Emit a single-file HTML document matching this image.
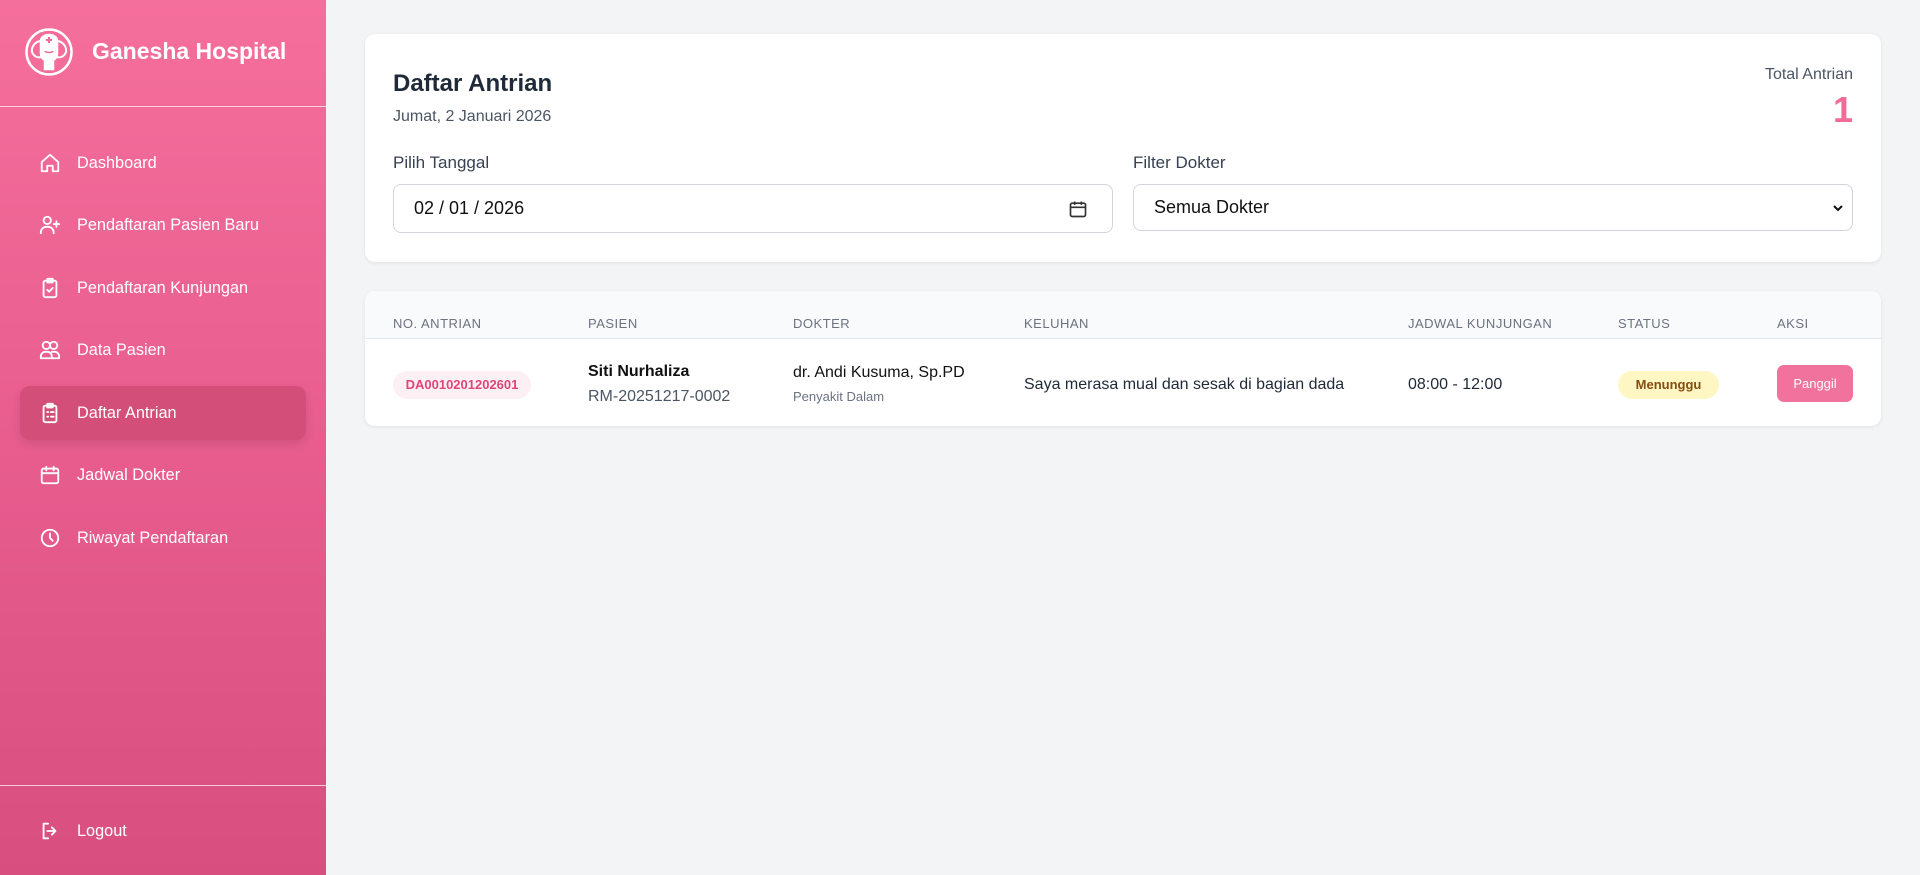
<!DOCTYPE html>
<html><head><meta charset="utf-8"><style>
*{box-sizing:border-box;margin:0;padding:0}
body{width:1920px;height:875px;overflow:hidden;font-family:"Liberation Sans",sans-serif;background:#f3f4f6;position:relative;color:#1f2937}
.sb{position:absolute;left:0;top:0;width:326px;height:875px;background:linear-gradient(180deg,#f56f9c 0%,#e85d8e 50%,#d84f7f 100%);color:#fff}
.logo{position:absolute;left:24px;top:27px;width:50px;height:50px}
.brand{position:absolute;left:92px;top:38px;font-size:23px;font-weight:bold}
.hr1{position:absolute;left:0;top:106px;width:326px;height:1px;background:rgba(255,255,255,.7)}
.hr2{position:absolute;left:0;top:785px;width:326px;height:1px;background:rgba(255,255,255,.7)}
.nav{position:absolute;left:20px;width:286px;height:54px;display:flex;align-items:center;font-size:16.3px}
.nav svg{position:absolute;left:19px;width:22px;height:22px;fill:none;stroke:#fff;stroke-width:2;stroke-linecap:round;stroke-linejoin:round}
.nav span{position:absolute;left:57px}
.act{background:#d34f7a;border-radius:10px;box-shadow:0 4px 10px rgba(0,0,0,.1)}
.card{position:absolute;left:365px;width:1516px;background:#fff;border-radius:10px;box-shadow:0 1px 4px rgba(0,0,0,.08)}
.t{position:absolute;white-space:nowrap}
.inp{position:absolute;top:150px;height:49px;border:1px solid #d1d5db;border-radius:8px;font-size:18px;display:flex;align-items:center;padding-left:20px;color:#111}
.th{position:absolute;top:25px;font-size:13px;color:#6b7280;letter-spacing:.5px}
</style></head><body>
<div class="sb">
<svg class="logo" viewBox="0 0 50 50" fill="none" stroke="#fff" stroke-width="2.5"><circle cx="25" cy="25" r="22.5"/><path d="M16 14c-5 1-9 6-8 11 2 5 6 6 9 5M34 14c5 1 9 6 8 11-2 5-6 6-9 5" stroke-width="2"/><path d="M17 14c0-4 4-6 8-6s8 2 8 6v12c0 4-2 6-4 7v9h-8v-9c-2-1-4-3-4-7z" fill="#fff"/><path d="M25 10v6M22 13h6" stroke="#f06b98" stroke-width="2"/><path d="M21 24c1 2 7 2 8 0" stroke="#f06b98" stroke-width="1.5"/></svg>
<div class="brand">Ganesha Hospital</div>
<div class="hr1"></div>
<div class="nav" style="top:136px"><svg viewBox="0 0 24 24"><path d="M3 11l9-8 9 8v10h-6v-6h-6v6H3z"/></svg><span>Dashboard</span></div>
<div class="nav" style="top:198px"><svg viewBox="0 0 24 24"><circle cx="9" cy="7" r="4"/><path d="M2 21v-1a6 6 0 0 1 6-6h2a6 6 0 0 1 6 6v1M19 8v6M16 11h6"/></svg><span>Pendaftaran Pasien Baru</span></div>
<div class="nav" style="top:261px"><svg viewBox="0 0 24 24"><rect x="5" y="4" width="14" height="18" rx="2"/><path d="M9 2h6v4H9zM9 14l2 2 4-4"/></svg><span>Pendaftaran Kunjungan</span></div>
<div class="nav" style="top:323px"><svg viewBox="0 0 24 24"><circle cx="8" cy="7" r="4"/><circle cx="16" cy="7" r="4"/><path d="M2 21v-2a5 5 0 0 1 5-5h2a5 5 0 0 1 5 5v2zM14 14h3a5 5 0 0 1 5 5v2h-8"/></svg><span>Data Pasien</span></div>
<div class="nav act" style="top:386px"><svg viewBox="0 0 24 24"><rect x="5" y="4" width="14" height="18" rx="2"/><path d="M9 2h6v4H9zM9 11h1M13 11h3M9 16h1M13 16h3"/></svg><span>Daftar Antrian</span></div>
<div class="nav" style="top:448px"><svg viewBox="0 0 24 24"><rect x="3" y="5" width="18" height="16" rx="2"/><path d="M8 3v4M16 3v4M3 10h18"/></svg><span>Jadwal Dokter</span></div>
<div class="nav" style="top:511px"><svg viewBox="0 0 24 24"><circle cx="12" cy="12" r="9"/><path d="M12 7v5l3 3"/></svg><span>Riwayat Pendaftaran</span></div>
<div class="hr2"></div>
<div class="nav" style="top:804px"><svg viewBox="0 0 24 24"><path d="M10 4H5v16h5M14 8l4 4-4 4M18 12H9"/></svg><span>Logout</span></div>
</div>

<div class="card" style="top:34px;height:228px">
<div class="t" style="left:28px;top:36px;font-size:24px;font-weight:bold;color:#1f2937">Daftar Antrian</div>
<div class="t" style="left:28px;top:74px;font-size:16px;color:#4b5563">Jumat, 2 Januari 2026</div>
<div class="t" style="right:28px;top:32px;font-size:16px;color:#4b5563">Total Antrian</div>
<div class="t" style="right:28px;top:55px;font-size:36px;font-weight:bold;color:#f06b98">1</div>
<div class="t" style="left:28px;top:119px;font-size:17px;color:#374151">Pilih Tanggal</div>
<div class="t" style="left:768px;top:119px;font-size:17px;color:#374151">Filter Dokter</div>
<div class="inp" style="left:28px;width:720px">02 / 01 / 2026
<svg style="position:absolute;right:24px;top:14px" width="20" height="20" viewBox="0 0 24 24" fill="none" stroke="#333" stroke-width="2"><rect x="3" y="5" width="18" height="16" rx="2"/><path d="M8 3v4M16 3v4M3 10h18"/></svg></div>
<div class="inp" style="left:768px;width:720px;height:47px;top:150px">Semua Dokter
<svg style="position:absolute;right:8px;top:18px" width="12" height="10" viewBox="0 0 12 10" fill="none" stroke="#111" stroke-width="2"><path d="M2 3l4 4 4-4"/></svg></div>
</div>

<div class="card" style="top:291px;height:135px;overflow:hidden">
<div style="position:absolute;left:0;top:0;width:100%;height:48px;background:#f9fafb;border-bottom:1px solid #e5e7eb"></div>
<div class="th" style="left:28px">NO. ANTRIAN</div>
<div class="th" style="left:223px">PASIEN</div>
<div class="th" style="left:428px">DOKTER</div>
<div class="th" style="left:659px">KELUHAN</div>
<div class="th" style="left:1043px">JADWAL KUNJUNGAN</div>
<div class="th" style="left:1253px">STATUS</div>
<div class="th" style="left:1412px">AKSI</div>
<div class="t" style="left:28px;top:80px;height:28px;width:138px;border-radius:14px;background:#fdf0f5;color:#e0457a;font-size:13px;font-weight:bold;text-align:center;line-height:28px">DA0010201202601</div>
<div class="t" style="left:223px;top:72px;font-size:16px;font-weight:bold;color:#111">Siti Nurhaliza</div>
<div class="t" style="left:223px;top:97px;font-size:16px;color:#4b5563">RM-20251217-0002</div>
<div class="t" style="left:428px;top:73px;font-size:16px;color:#111">dr. Andi Kusuma, Sp.PD</div>
<div class="t" style="left:428px;top:98px;font-size:13px;color:#6b7280">Penyakit Dalam</div>
<div class="t" style="left:659px;top:85px;font-size:16px;color:#1f2937">Saya merasa mual dan sesak di bagian dada</div>
<div class="t" style="left:1043px;top:85px;font-size:16px;color:#1f2937">08:00 - 12:00</div>
<div class="t" style="left:1253px;top:80px;height:28px;width:101px;border-radius:14px;background:#fef6c3;color:#854d0e;font-size:13px;font-weight:bold;text-align:center;line-height:28px">Menunggu</div>
<div class="t" style="left:1412px;top:74px;height:37px;width:76px;border-radius:7px;background:#f2729e;color:#fff;font-size:13px;text-align:center;line-height:37px">Panggil</div>
</div>
</body></html>
